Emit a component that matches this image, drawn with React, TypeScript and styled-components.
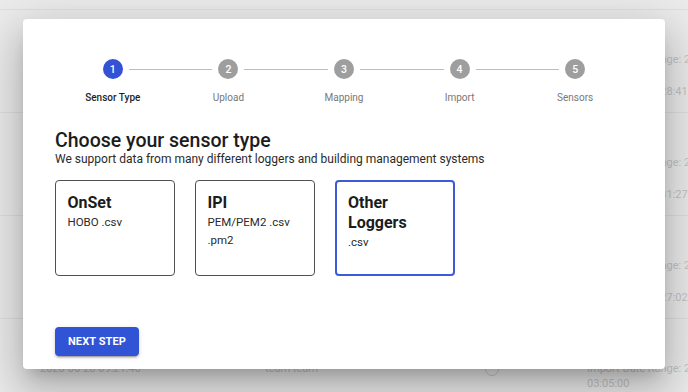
import React from "react";
import styled, { createGlobalStyle } from "styled-components";

const GlobalStyle = createGlobalStyle`
  html, body { margin: 0; padding: 0; }
  body { font-family: Roboto, "Liberation Sans", Arial, sans-serif; background: #ebebeb; }
  * { box-sizing: border-box; }
`;

const Screen = styled.div`
  position: relative;
  width: 688px;
  height: 392px;
  overflow: hidden;
  background: #ebebeb;
`;

const BgList = styled.div`
  display: flex;
  flex-direction: column;
  margin-top: -93px;
`;

const BgRow = styled.div`
  height: 103px;
  border-bottom: 1px solid #dedede;
  display: grid;
  grid-template-columns: 225px 220px 102px 1fr;
  padding: 43px 0 0 40px;
  color: #c3c3c3;
  font-size: 11px;
  line-height: 14px;
`;

const BgCell = styled.div<{ $gap?: number }>`
  display: flex;
  flex-direction: column;
  gap: ${(p) => p.$gap ?? 0}px;
  white-space: nowrap;
`;

const BgIcon = styled.div`
  width: 14px;
  height: 14px;
  border: 1px solid #c8c8c8;
  border-radius: 50%;
`;

const Modal = styled.div`
  position: absolute;
  left: 23px;
  top: 19px;
  width: 642px;
  height: 350px;
  background: #fff;
  border-radius: 4px;
  padding: 40px 32px 13px;
  display: flex;
  flex-direction: column;
  box-shadow: 0 11px 15px -7px rgba(0, 0, 0, 0.2), 0 24px 38px 3px rgba(0, 0, 0, 0.14),
    0 9px 46px 8px rgba(0, 0, 0, 0.12);
`;

const Stepper = styled.div`
  display: grid;
  grid-template-columns: repeat(5, 1fr);
`;

const Step = styled.div`
  position: relative;
  display: flex;
  flex-direction: column;
  align-items: center;
`;

const Connector = styled.span`
  position: absolute;
  top: 10px;
  left: calc(-50% + 16px);
  right: calc(50% + 16px);
  border-top: 1px solid #bdbdbd;
`;

const StepCircle = styled.div<{ $active?: boolean }>`
  width: 20px;
  height: 20px;
  border-radius: 50%;
  background: ${(p) => (p.$active ? "#3352d6" : "#9e9e9e")};
  color: #fff;
  font-size: 10.5px;
  font-weight: 500;
  display: flex;
  align-items: center;
  justify-content: center;
  position: relative;
  z-index: 1;
`;

const StepLabel = styled.div<{ $active?: boolean }>`
  margin-top: 12px;
  font-size: 10px;
  line-height: 13px;
  color: ${(p) => (p.$active ? "#1f1f1f" : "#787878")};
  font-weight: ${(p) => (p.$active ? 500 : 400)};
`;

const Heading = styled.h2`
  margin: 26px 0 0;
  font-size: 19.5px;
  line-height: 22px;
  font-weight: 500;
  color: #1c1c1c;
`;

const Subtitle = styled.p`
  margin: 0;
  font-size: 12px;
  line-height: 15px;
  color: #2a2a2a;
`;

const Cards = styled.div`
  display: flex;
  gap: 20px;
  margin-top: 13px;
`;

const Card = styled.div<{ $selected?: boolean }>`
  width: 120px;
  height: 96px;
  border-radius: 4px;
  border: ${(p) => (p.$selected ? "2px solid #3d5bd6" : "1.5px solid #505050")};
  padding: ${(p) => (p.$selected ? "11px" : "11.5px")};
  display: flex;
  flex-direction: column;
`;

const CardTitle = styled.div`
  font-size: 16px;
  line-height: 20px;
  font-weight: 700;
  color: #1c1c1c;
`;

const CardLine = styled.div`
  font-size: 11.5px;
  line-height: 18px;
  color: #2a2a2a;
`;

const Footer = styled.div`
  margin-top: auto;
  display: flex;
`;

const NextButton = styled.button`
  height: 29px;
  padding: 0 13px;
  border: none;
  border-radius: 4px;
  background: #3153d6;
  color: #fff;
  font-family: inherit;
  font-size: 11px;
  font-weight: 700;
  letter-spacing: 0.1px;
  text-transform: uppercase;
  box-shadow: 0 3px 1px -2px rgba(0, 0, 0, 0.2), 0 2px 2px 0 rgba(0, 0, 0, 0.14),
    0 1px 5px 0 rgba(0, 0, 0, 0.12);
`;

const steps = ["Sensor Type", "Upload", "Mapping", "Import", "Sensors"];

const cards = [
  { title: "OnSet", lines: ["HOBO .csv"] },
  { title: "IPI", lines: ["PEM/PEM2 .csv", ".pm2"] },
  { title: "Other Loggers", lines: [".csv"], selected: true },
];

const bgRows = [
  { date: "2020-06-24 10:12:03", user: "team team", r1: "Import Date Range: 2020-06-20", r2: "2020-06-24 06:31:10", gap: 18 },
  { date: "2020-06-26 08:44:19", user: "team team", r1: "Import Date Range: 2020-06-21", r2: "2020-06-26 06:28:41", gap: 18 },
  { date: "2020-06-27 11:02:55", user: "team team", r1: "Import Date Range: 2020-06-22", r2: "2020-06-27 06:31:27", gap: 18 },
  { date: "2020-06-27 14:10:31", user: "team team", r1: "Import Date Range: 2020-06-23", r2: "2020-06-27 06:27:02", gap: 18 },
  { date: "2020-06-28 09:21:46", user: "team team", r1: "Import Date Range: 2020-06-24", r2: "03:05:00", gap: 1 },
];

export default function App() {
  return (
    <Screen>
      <GlobalStyle />
      <BgList>
        {bgRows.map((r, i) => (
          <BgRow key={i}>
            <BgCell>{r.date}</BgCell>
            <BgCell>{r.user}</BgCell>
            <BgCell>
              <BgIcon />
            </BgCell>
            <BgCell $gap={r.gap}>
              <span>{r.r1}</span>
              <span>{r.r2}</span>
            </BgCell>
          </BgRow>
        ))}
      </BgList>
      <Modal>
        <Stepper>
          {steps.map((s, i) => (
            <Step key={s}>
              {i > 0 && <Connector />}
              <StepCircle $active={i === 0}>{i + 1}</StepCircle>
              <StepLabel $active={i === 0}>{s}</StepLabel>
            </Step>
          ))}
        </Stepper>
        <Heading>Choose your sensor type</Heading>
        <Subtitle>We support data from many different loggers and building management systems</Subtitle>
        <Cards>
          {cards.map((c) => (
            <Card key={c.title} $selected={c.selected}>
              <CardTitle>{c.title}</CardTitle>
              {c.lines.map((l) => (
                <CardLine key={l}>{l}</CardLine>
              ))}
            </Card>
          ))}
        </Cards>
        <Footer>
          <NextButton>Next Step</NextButton>
        </Footer>
      </Modal>
    </Screen>
  );
}
